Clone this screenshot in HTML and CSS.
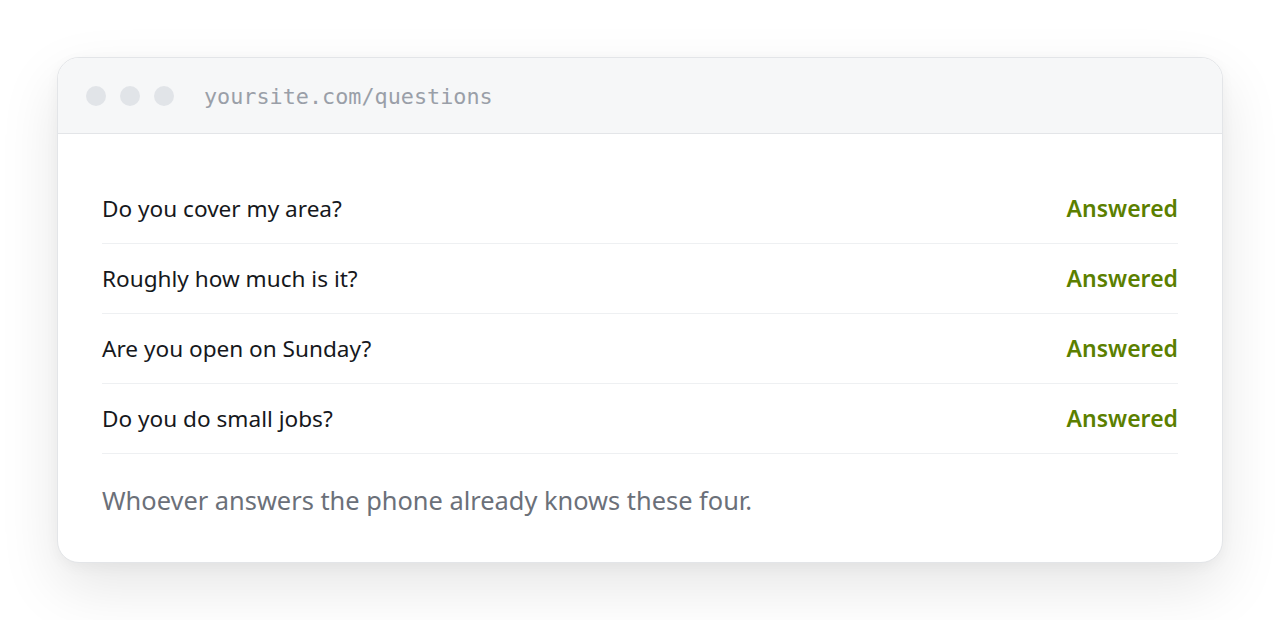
FILE: index.html
```html
<!DOCTYPE html>
<html lang="en">
<head>
<meta charset="utf-8">
<title>Questions</title>
<link rel="stylesheet" href="styles.css">
</head>
<body>
<div class="card">
  <div class="bar">
    <div class="dots"><span class="dot"></span><span class="dot"></span><span class="dot"></span></div>
    <div class="url">yoursite.com/questions</div>
  </div>
  <div class="body">
    <ul class="list">
      <li class="row"><span class="q">Do you cover my area?</span><span class="a">Answered</span></li>
      <li class="row"><span class="q">Roughly how much is it?</span><span class="a">Answered</span></li>
      <li class="row"><span class="q">Are you open on Sunday?</span><span class="a">Answered</span></li>
      <li class="row"><span class="q">Do you do small jobs?</span><span class="a">Answered</span></li>
    </ul>
    <p class="note">Whoever answers the phone already knows these four.</p>
  </div>
</div>
</body>
</html>
```
FILE: styles.css
```css
* { box-sizing: border-box; }
html, body { margin: 0; padding: 0; background: #ffffff; }
body {
  padding: 57px 57px 0 57px;
  font-family: "Noto Sans", "Open Sans", sans-serif;
  height: 620px;
  overflow: hidden;
}
.card {
  width: 1166px;
  height: 506px;
  border: 1px solid #e3e5e8;
  border-radius: 22px;
  background: #fff;
  overflow: hidden;
  box-shadow: 0 24px 60px rgba(0,0,0,0.10), 0 4px 14px rgba(0,0,0,0.04);
}
.bar {
  height: 76px;
  background: #f6f7f8;
  border-bottom: 1px solid #e3e5e8;
  display: flex;
  align-items: center;
  padding: 0 0 0 28px;
}
.dots { display: flex; gap: 14px; }
.dot { width: 20px; height: 20px; border-radius: 50%; background: #e1e4e8; }
.url {
  margin-left: 30px;
  font-family: "DejaVu Sans Mono", "Liberation Mono", monospace;
  font-size: 21.8px;
  color: #9a9fa8;
  position: relative;
  top: 1px;
}
.body { padding: 40px 44px 0 44px; }
.list { list-style: none; margin: 0; padding: 0; }
.row {
  height: 70px;
  display: flex;
  justify-content: space-between;
  align-items: center;
  border-bottom: 1px solid #eef0f2;
  padding-bottom: 1px;
}
.q { font-size: 22.6px; color: #16181c; }
.a { font-size: 23px; font-weight: 600; color: #5b7f00; }
.note {
  margin: 30px 0 0 0;
  font-size: 25.4px;
  color: #6b7079;
  line-height: 32px;
}
```
